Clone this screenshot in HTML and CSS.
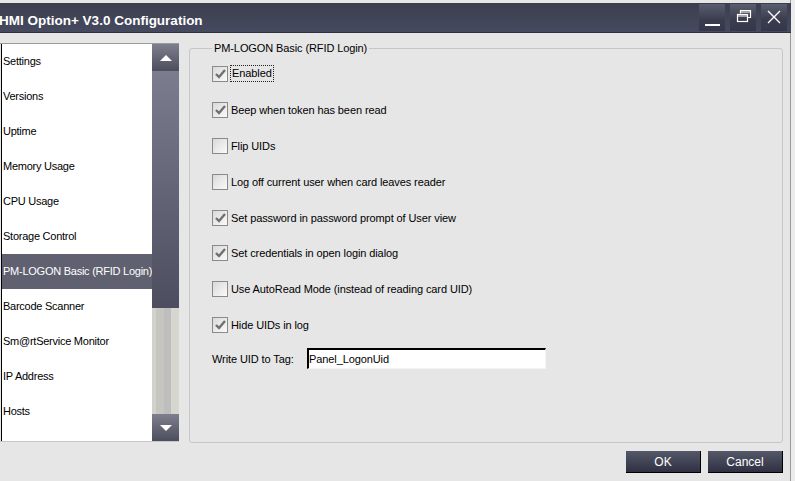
FILE: index.html
```html
<!DOCTYPE html>
<html lang="en">
<head>
  <meta charset="UTF-8">
  <title>HMI Option+ V3.0 Configuration</title>
  <link rel="stylesheet" href="styles.css">
</head>
<body>
  <div class="window">
    <div class="titlebar">
      <span class="title">HMI Option+ V3.0 Configuration</span>
      <div class="winbtns">
        <div class="winbtn">
          <svg width="26" height="27" viewBox="0 0 26 27"><rect x="6" y="20" width="15" height="2" fill="#fff"/></svg>
        </div>
        <div class="winbtn">
          <svg width="26" height="27" viewBox="0 0 26 27" fill="none" stroke="#fff" stroke-width="1.2">
            <path d="M10.5 9.5v-3h10v7h-3"/><rect x="7.5" y="10.5" width="10" height="7"/><path d="M7.5 12h10M10.5 8h10"/>
          </svg>
        </div>
        <div class="winbtn">
          <svg width="26" height="27" viewBox="0 0 26 27" stroke="#fff" stroke-width="1.4"><path d="M7 7l12 12M19 7L7 19"/></svg>
        </div>
      </div>
    </div>

    <div class="main">
      <div class="listbox">
        <ul class="items">
          <li>Settings</li>
          <li>Versions</li>
          <li>Uptime</li>
          <li>Memory Usage</li>
          <li>CPU Usage</li>
          <li>Storage Control</li>
          <li class="selected">PM-LOGON Basic (RFID Login)</li>
          <li>Barcode Scanner</li>
          <li>Sm@rtService Monitor</li>
          <li>IP Address</li>
          <li>Hosts</li>
          <li>Time Settings</li>
        </ul>
        <div class="scrollbar">
          <div class="sb-btn"><span class="arrow-up"></span></div>
          <div class="sb-thumb"></div>
          <div class="sb-track"></div>
          <div class="sb-btn"><span class="arrow-down"></span></div>
        </div>
      </div>

      <fieldset class="group">
        <legend>PM-LOGON Basic (RFID Login)</legend>
        <div class="check-row"><span class="box on"></span><span class="focus">Enabled</span></div>
        <div class="check-row"><span class="box on"></span>Beep when token has been read</div>
        <div class="check-row"><span class="box"></span>Flip UIDs</div>
        <div class="check-row"><span class="box"></span>Log off current user when card leaves reader</div>
        <div class="check-row"><span class="box on"></span>Set password in password prompt of User view</div>
        <div class="check-row"><span class="box on"></span>Set credentials in open login dialog</div>
        <div class="check-row"><span class="box"></span>Use AutoRead Mode (instead of reading card UID)</div>
        <div class="check-row"><span class="box on"></span>Hide UIDs in log</div>
        <div class="tag-row">
          <label for="tag">Write UID to Tag:</label>
          <input type="text" id="tag" value="Panel_LogonUid">
        </div>
      </fieldset>
    </div>

    <div class="footer">
      <button>OK</button>
      <button>Cancel</button>
    </div>
  </div>
</body>
</html>
```

FILE: styles.css
```css
body {
  margin: 0;
  width: 795px;
  height: 481px;
  overflow: hidden;
  background-color: #ececec;
  font-family: "Liberation Sans", Arial, sans-serif;
  font-size: 11px;
  letter-spacing: -0.1px;
  color: #000;
}
.window {
  width: 791px;
  height: 481px;
  border-right: 1px solid #9a9a9a;
  background-color: #e6e6e6;
  box-sizing: border-box;
  padding-top: 3px;
  display: flex;
  flex-direction: column;
}
.titlebar {
  height: 30px;
  background: linear-gradient(#3c3e50, #464a5e);
  border-bottom: 1px solid #2e3040;
  box-sizing: border-box;
  display: flex;
  align-items: center;
  justify-content: space-between;
  margin-right: -1px;
}
.title {
  color: #fff;
  font-weight: bold;
  font-size: 13.5px;
  letter-spacing: 0;
  margin-left: -1px;
  margin-top: 5px;
}
.winbtns {
  display: flex;
  gap: 5px;
  margin-right: 4px;
  align-self: flex-start;
  margin-top: 1px;
}
.winbtn {
  width: 26px;
  height: 27px;
  background: linear-gradient(#5a5d6e, #3a3c4e 60%, #34364a);
}
.winbtn svg {
  display: block;
}
.main {
  display: flex;
  margin-top: 10px;
  height: 400px;
}
.listbox {
  width: 179px;
  height: 399px;
  display: flex;
  border-top: 1px solid #9a9a9a;
  border-bottom: 1px solid #c8c8c8;
  box-sizing: border-box;
  overflow: hidden;
}
.items {
  list-style: none;
  margin: 0 0 0 1px;
  padding: 0;
  width: 151px;
  background-color: #fff;
  border-left: 1px solid #000;
  overflow: hidden;
}
.items li {
  height: 35px;
  line-height: 35px;
  padding-left: 1px;
  white-space: nowrap;
  letter-spacing: -0.25px;
}
.items li.selected {
  background-color: #5f6171;
  color: #fff;
}
.scrollbar {
  width: 27px;
  display: flex;
  flex-direction: column;
}
.sb-btn {
  height: 27px;
  background: linear-gradient(#7d7f8e, #4c4e5e);
  display: flex;
  align-items: center;
  justify-content: center;
}
.arrow-up {
  border-left: 6px solid transparent;
  border-right: 6px solid transparent;
  border-bottom: 6px solid #fff;
}
.arrow-down {
  border-left: 6px solid transparent;
  border-right: 6px solid transparent;
  border-top: 6px solid #fff;
}
.sb-thumb {
  height: 237px;
  background-image: linear-gradient(#7b7d8e, #4c4e5f);
}
.sb-track {
  flex: 1;
  background: linear-gradient(90deg, #d2d2ca 0 4px, #c6c6c0 4px 12px, #bebebe 12px 19px, #d6d6ce 19px);
}
.group {
  margin: -1px 0 0 10px;
  width: 594px;
  height: 401px;
  box-sizing: border-box;
  border: 1px solid #c6c6c6;
  border-radius: 3px;
  padding: 1px 0 0 22px;
}
.group legend {
  padding: 0 2px;
  margin-left: 0;
  line-height: 13px;
  color: #000;
}
.check-row {
  height: 35.9px;
  display: flex;
  align-items: center;
  gap: 3px;
}
.box {
  width: 14px;
  height: 14px;
  border: 1px solid #8a8a8a;
  background: linear-gradient(135deg, #d9d9d9, #fafafa);
  flex-shrink: 0;
}
.box.on {
  background-image: url("data:image/svg+xml,%3Csvg xmlns='http://www.w3.org/2000/svg' width='14' height='14'%3E%3Cpath d='M3 7l3 3 6-7' fill='none' stroke='%23707070' stroke-width='2.4'/%3E%3C/svg%3E"), linear-gradient(135deg, #d9d9d9, #fafafa);
}
.focus {
  outline: 1px dotted #222;
  padding: 0 1px;
  line-height: 15px;
}
.tag-row {
  display: flex;
  align-items: center;
  margin-top: 5px;
}
.tag-row label {
  width: 95px;
}
.tag-row input {
  width: 239px;
  height: 21px;
  box-sizing: border-box;
  border: 1px solid;
  border-color: #000 #f4f4f4 #f4f4f4 #000;
  border-width: 2px 1px 1px 2px;
  background-color: #fff;
  font-family: "Liberation Sans", Arial, sans-serif;
  font-size: 11px;
  letter-spacing: -0.1px;
  padding: 0;
}
.footer {
  display: flex;
  justify-content: flex-end;
  gap: 7px;
  margin-top: 8px;
  padding-right: 7px;
}
.footer button {
  width: 75px;
  height: 22px;
  background: linear-gradient(#555869, #2f3142);
  color: #fff;
  border: none;
  border-right: 1px solid #000;
  border-bottom: 1px solid #000;
  font-family: "Liberation Sans", Arial, sans-serif;
  font-size: 12px;
}
```
